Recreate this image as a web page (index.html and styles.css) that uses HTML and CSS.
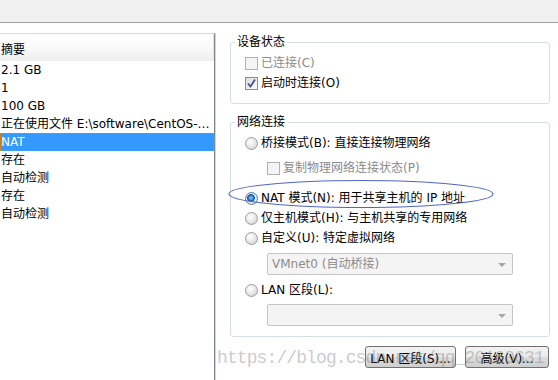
FILE: index.html
```html
<!DOCTYPE html>
<html lang="zh-CN">
<head>
    <meta charset="UTF-8">
    <title>虚拟机设置 - 网络适配器</title>
    <link rel="stylesheet" href="styles.css">
</head>
<body>

    <div class="titlebar"></div>

    <div class="main">

        <!-- Hardware summary list -->
        <div class="summary">
            <div class="list-head">摘要</div>
            <div class="row">2.1 GB</div>
            <div class="row">1</div>
            <div class="row">100 GB</div>
            <div class="row">正在使用文件 E:\software\CentOS-7-x86_64-DVD-1708.iso</div>
            <div class="row selected">NAT</div>
            <div class="row">存在</div>
            <div class="row">自动检测</div>
            <div class="row">存在</div>
            <div class="row">自动检测</div>
        </div>

        <!-- Network adapter settings -->
        <div class="settings">
            <fieldset class="group">
                <legend>设备状态</legend>
                <div class="opt disabled"><span class="check"></span>已连接(C)</div>
                <div class="opt"><span class="check checked"><svg width="11" height="11" viewBox="0 0 11 11"><path d="M2 5.5 L4.5 8.5 L9 1.5" fill="none" stroke="#3e5290" stroke-width="1.8"/></svg></span>启动时连接(O)</div>
            </fieldset>

            <fieldset class="group group-net">
                <legend>网络连接</legend>
                <div class="opt"><span class="radio"></span>桥接模式(B): 直接连接物理网络</div>
                <div class="opt disabled sub"><span class="check"></span>复制物理网络连接状态(P)</div>
                <div class="opt nat"><span class="radio on"></span>NAT 模式(N): 用于共享主机的 IP 地址</div>
                <div class="opt"><span class="radio"></span>仅主机模式(H): 与主机共享的专用网络</div>
                <div class="opt"><span class="radio"></span>自定义(U): 特定虚拟网络</div>
                <div class="select">VMnet0 (自动桥接)</div>
                <div class="opt lan"><span class="radio"></span>LAN 区段(L):</div>
                <div class="select select-lan"></div>
            </fieldset>

            <div class="actions">
                <button class="btn btn-lan">LAN 区段(S)...</button>
                <button class="btn btn-adv">高级(V)...</button>
            </div>

            <!-- annotation drawn over the dialog -->
            <svg class="mark" width="270" height="32" viewBox="0 0 270 32">
                <ellipse cx="134" cy="15" rx="132" ry="13.5" fill="none" stroke="#4f66cc" stroke-width="1.1"/>
            </svg>
            <div class="watermark">https://blog.csdn.net/qq_20160631</div>
        </div>

    </div>

</body>
</html>
```

FILE: styles.css
```css
body {
    margin: 0;
    padding: 0;
    width: 558px;
    height: 380px;
    overflow: hidden;
    background-color: #fff;
    font-family: "DejaVu Sans", "Noto Sans CJK SC", sans-serif;
    font-size: 12px;
    color: #000;
}

.titlebar {
    height: 22px;
    background-color: #f0f0f0;
    border-bottom: 1px solid #a0a0a0;
}

.main {
    display: flex;
    height: 357px;
}

/* left list */
.summary {
    width: 215px;
    box-sizing: border-box;
    margin-top: 10px;
    border-top: 1px solid #d9d9d9;
    border-right: 1px solid #828790;
    box-shadow: 1px 0 0 #d4d4d4;
}
.list-head {
    height: 27px;
    box-sizing: border-box;
    padding: 7px 0 0 1px;
    line-height: 18px;
    background: linear-gradient(#fff 0%, #fbfbfb 40%, #efefef 100%);
    border-right: 1px solid #e3e3e3;
}
.row {
    height: 18px;
    line-height: 18px;
    padding-left: 1px;
    white-space: nowrap;
    overflow: hidden;
    text-overflow: ellipsis;
}
.row.selected {
    background-color: #3399ff;
    color: #fff;
    outline: 1px dotted #c08a3e;
    outline-offset: -1px;
}

/* right side */
.settings {
    position: relative;
    flex: 1;
}
.group {
    margin: 11px 8px 0 15px;
    padding: 3px 0 10px 14px;
    border: 1px solid #d5dfe5;
    border-radius: 3px;
}
.group legend {
    margin-left: -10px;
    padding: 0 2px;
    line-height: 16px;
}
.group-net {
    margin-top: 10px;
}
.opt {
    display: flex;
    align-items: center;
    height: 20px;
    line-height: 20px;
    white-space: nowrap;
}
.opt.disabled {
    color: #8b8b8b;
}
.opt.sub {
    margin: 5px 0 0 22px;
}
.opt.nat {
    margin-top: 10px;
}
.check,
.radio {
    display: inline-block;
    box-sizing: border-box;
    width: 13px;
    height: 13px;
    margin-right: 3px;
    flex: none;
}
.check {
    border: 1px solid #b2b2b2;
    background: #f4f4f4;
}
.check.checked {
    border-color: #8e8f8f;
    background: linear-gradient(135deg, #dcdcdc, #fdfdfd);
    padding: 0;
}
.check svg {
    display: block;
}
.radio {
    border-radius: 50%;
    border: 1px solid #9c9c9c;
    background: radial-gradient(circle at 40% 35%, #ffffff 0%, #eaeaea 45%, #c9c9c9 100%);
}
.radio.on {
    border-color: #5f7a9c;
    background: radial-gradient(circle at 45% 45%, #9fd4ff 0%, #2c7fd4 28%, #17508f 42%, #e9eef3 48%, #cfd6dd 100%);
}

.select {
    position: relative;
    box-sizing: border-box;
    width: 246px;
    height: 22px;
    margin: 5px 0 5px 22px;
    padding-left: 4px;
    line-height: 20px;
    color: #8b8b8b;
    background-color: #f4f4f4;
    border: 1px solid #c5c5c5;
    border-radius: 2px;
}
.select::after {
    content: "";
    position: absolute;
    right: 6px;
    top: 9px;
    border-left: 4px solid transparent;
    border-right: 4px solid transparent;
    border-top: 4px solid #a6a6a6;
}
.select-lan {
    margin-top: 4px;
    margin-bottom: 0;
}

.actions {
    display: flex;
    justify-content: flex-end;
    gap: 9px;
    margin-top: 9px;
    padding-right: 9px;
}
.btn {
    height: 22px;
    padding: 0;
    font-family: inherit;
    font-size: 12px;
    color: #000;
    border: 1px solid #707070;
    border-radius: 3px;
    background: linear-gradient(#f2f2f2 0%, #ebebeb 50%, #dddddd 51%, #cfcfcf 100%);
}
.btn-lan {
    width: 91px;
}
.btn-adv {
    width: 84px;
}

.mark {
    position: absolute;
    left: 12px;
    top: 156px;
}
.watermark {
    position: absolute;
    left: 2px;
    top: 325px;
    font-family: "Liberation Mono", monospace;
    font-size: 18px;
    letter-spacing: -0.9px;
    color: rgba(120, 120, 120, 0.4);
    white-space: nowrap;
}
```
